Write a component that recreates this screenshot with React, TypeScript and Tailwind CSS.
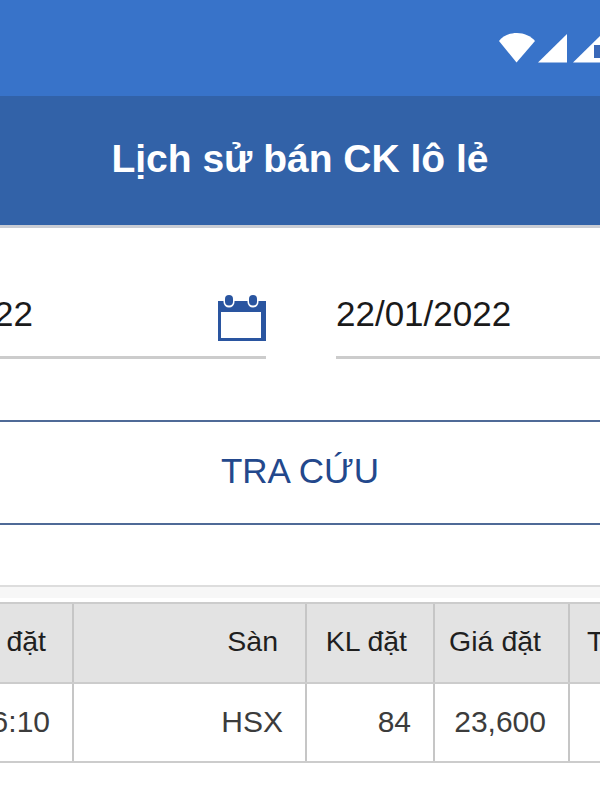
export default function App() {
  const font = { fontFamily: '"Liberation Sans", Arial, sans-serif' };
  return (
    <div style={font} className="w-[600px] h-[800px] overflow-hidden bg-white flex flex-col">
      <div className="h-[96px] shrink-0 bg-[#3873c9] flex justify-end items-start pt-[33px]">
        <svg width="102" height="31" viewBox="0 0 102 31" className="shrink-0">
          <path d="M1 8C5 3 11 0 19 0C26 0 33 3 37 8L18.500 29.500Z" fill="#fff" />
          <path d="M40 29.500L69 1V29.500Z" fill="#fff" />
          <path d="M75 29.500L102 3V29.500Z" fill="#fff" />
          <path d="M96 12H102V25H96Z" fill="#3a68b8" />
        </svg>
      </div>
      <div className="h-[129px] shrink-0 bg-[#3262a8] flex justify-center pt-[40px]">
        <h1 className="text-[39px] leading-[46px] font-bold text-white whitespace-nowrap">Lịch sử bán CK lô lẻ</h1>
      </div>
      <div className="h-[3px] shrink-0 bg-[#c9ccd4]" />

      <div className="h-[131px] shrink-0 flex pt-[60px]">
        <div className="w-[266px] h-[71px] shrink-0 border-b-[3px] border-[#cccccc] flex justify-between items-start">
          <span className="text-[35px] leading-[50px] pt-[1px] text-[#1a1a1a] -ml-[6px] w-[39px] text-right">22</span>
          <svg width="48" height="47" viewBox="0 0 48 47" className="mt-[7px] shrink-0">
            <path d="M0 6H48V46H0Z" fill="#2a55a0" />
            <rect x="3" y="17" width="40" height="26" fill="#fff" />
            <rect x="5.500" y="0" width="11" height="12.500" rx="5.500" fill="#fff" />
            <rect x="29.500" y="0" width="11" height="12.500" rx="5.500" fill="#fff" />
            <rect x="7" y="0" width="8" height="10.500" rx="4" fill="#2a55a0" />
            <rect x="31" y="0" width="8" height="10.500" rx="4" fill="#2a55a0" />
          </svg>
        </div>
        <div className="w-[264px] ml-[70px] h-[71px] shrink-0 border-b-[3px] border-[#cccccc]">
          <span className="block text-[35px] leading-[50px] pt-[1px] text-[#1a1a1a] whitespace-nowrap">22/01/2022</span>
        </div>
      </div>

      <button className="mt-[61px] h-[105px] shrink-0 w-full border-y-2 border-[#4f6a97] flex items-center justify-center pb-[3px] text-[35px] text-[#23488c]">
        TRA CỨU
      </button>

      <div className="mt-[60px] h-[13px] shrink-0 border-t-2 border-[#dddddd] bg-[#f7f7f7]" />

      <div className="mt-[4px] shrink-0 w-[600px] border-y-2 border-[#cccccc] text-[28.500px]">
        <div className="h-[80px] flex bg-[#e3e3e3] border-b-2 border-[#cccccc] text-[#1f1f1f]">
          <div className="w-[74px] shrink-0 border-r-2 border-[#c6c6c6] flex items-center justify-end pr-[26px] pb-[3px] whitespace-nowrap">đặt</div>
          <div className="w-[233px] shrink-0 border-r-2 border-[#c6c6c6] flex items-center justify-end pr-[27px] pb-[3px]">Sàn</div>
          <div className="w-[128px] shrink-0 border-r-2 border-[#c6c6c6] flex items-center justify-end pr-[26px] pb-[3px] whitespace-nowrap">KL đặt</div>
          <div className="w-[135px] shrink-0 border-r-2 border-[#c6c6c6] flex items-center justify-end pr-[27px] pb-[3px] whitespace-nowrap">Giá đặt</div>
          <div className="flex-1 flex items-center pl-[17px] pb-[3px]">T</div>
        </div>
        <div className="h-[77px] flex bg-white text-[#3c3c3c] text-[30px]">
          <div className="w-[74px] shrink-0 border-r-2 border-[#c6c6c6] flex items-center justify-end pr-[22px] pb-[3px] whitespace-nowrap">6:10</div>
          <div className="w-[233px] shrink-0 border-r-2 border-[#c6c6c6] flex items-center justify-end pr-[22px] pb-[3px]">HSX</div>
          <div className="w-[128px] shrink-0 border-r-2 border-[#c6c6c6] flex items-center justify-end pr-[22px] pb-[3px]">84</div>
          <div className="w-[135px] shrink-0 border-r-2 border-[#c6c6c6] flex items-center justify-end pr-[22px] pb-[3px]">23,600</div>
          <div className="flex-1" />
        </div>
      </div>
    </div>
  );
}
